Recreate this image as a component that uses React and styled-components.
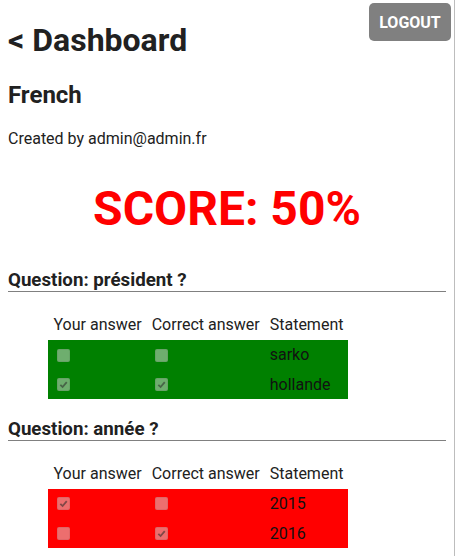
import React from "react";
import styled, { createGlobalStyle } from "styled-components";

const Global = createGlobalStyle`
  html {
    border-right: 1px solid #bdbdbd;
    min-height: 100%;
  }
  body {
    margin: 0 8px 8px 8px;
    font-family: Roboto, "Liberation Sans", Arial, sans-serif;
    color: #212121;
    font-size: 16px;
  }
`;

const Page = styled.div``;

const LogoutButton = styled.button`
  position: absolute;
  top: 3px;
  right: 4px;
  width: 82px;
  height: 38px;
  border: none;
  border-radius: 5px;
  background: #808080;
  color: #fff;
  font-family: Roboto, "Liberation Sans", Arial, sans-serif;
  font-weight: 700;
  font-size: 16px;
  padding: 0;
  cursor: pointer;
`;

const Title = styled.h1`
  font-size: 32px;
  font-weight: 700;
  margin: 21.44px 0;
`;

const QuizName = styled.h2`
  font-size: 24px;
  font-weight: 700;
  margin: 19.92px 0;
`;

const Author = styled.p`
  margin: 16px 0;
`;

const Score = styled.h1`
  font-size: 48px;
  font-weight: 700;
  color: #ff0000;
  text-align: center;
  margin: 32.16px 0;
`;

const QuestionTitle = styled.h3`
  font-size: 18.72px;
  font-weight: 700;
  margin: 18.72px 0 17.8px 0;
  border-bottom: 1px solid #808080;
`;

const AnswerTable = styled.table`
  margin: 0 0 16px 40px;
  border-collapse: collapse;
  font-size: 16px;
`;

const Row = styled.tr`
  background: ${(p) => p.$bg || "transparent"};
`;

const HeadCell = styled.th`
  font-weight: 400;
  text-align: left;
  padding: 0 4.5px 0 5.5px;
  height: 30px;
  color: #212121;
`;

const Cell = styled.td`
  padding: 0 4.5px 0 5.5px;
  height: 29.7px;
  color: #111;
`;

const Box = styled.span`
  display: inline-block;
  vertical-align: middle;
  box-sizing: border-box;
  width: 13px;
  height: 13px;
  margin: 0 3px 2px 3.5px;
  border-radius: 2px;
  background: rgba(220, 220, 220, 0.5);
  border: 1px solid rgba(0, 0, 0, 0.06);
  position: relative;
`;

const Check = styled.svg`
  position: absolute;
  left: 1px;
  top: 1px;
  width: 9px;
  height: 9px;
`;

function CheckBox({ checked }) {
  return (
    <Box>
      {checked && (
        <Check viewBox="0 0 10 10">
          <path
            d="M1.5 5.3 L4 7.8 L8.6 2.4"
            fill="none"
            stroke="rgba(40,40,40,0.55)"
            strokeWidth="2"
          />
        </Check>
      )}
    </Box>
  );
}

const questions = [
  {
    title: "Question: président ?",
    color: "#008000",
    answers: [
      { yours: false, correct: false, text: "sarko" },
      { yours: true, correct: true, text: "hollande" },
    ],
  },
  {
    title: "Question: année ?",
    color: "#ff0000",
    answers: [
      { yours: true, correct: false, text: "2015" },
      { yours: false, correct: true, text: "2016" },
    ],
  },
];

export default function App() {
  return (
    <Page>
      <Global />
      <LogoutButton>LOGOUT</LogoutButton>
      <Title>&lt; Dashboard</Title>
      <QuizName>French</QuizName>
      <Author>Created by admin@admin.fr</Author>
      <Score>SCORE: 50%</Score>
      {questions.map((q) => (
        <section key={q.title}>
          <QuestionTitle>{q.title}</QuestionTitle>
          <AnswerTable>
            <thead>
              <Row>
                <HeadCell>Your answer</HeadCell>
                <HeadCell>Correct answer</HeadCell>
                <HeadCell>Statement</HeadCell>
              </Row>
            </thead>
            <tbody>
              {q.answers.map((a) => (
                <Row key={a.text} $bg={q.color}>
                  <Cell>
                    <CheckBox checked={a.yours} />
                  </Cell>
                  <Cell>
                    <CheckBox checked={a.correct} />
                  </Cell>
                  <Cell>{a.text}</Cell>
                </Row>
              ))}
            </tbody>
          </AnswerTable>
        </section>
      ))}
    </Page>
  );
}
